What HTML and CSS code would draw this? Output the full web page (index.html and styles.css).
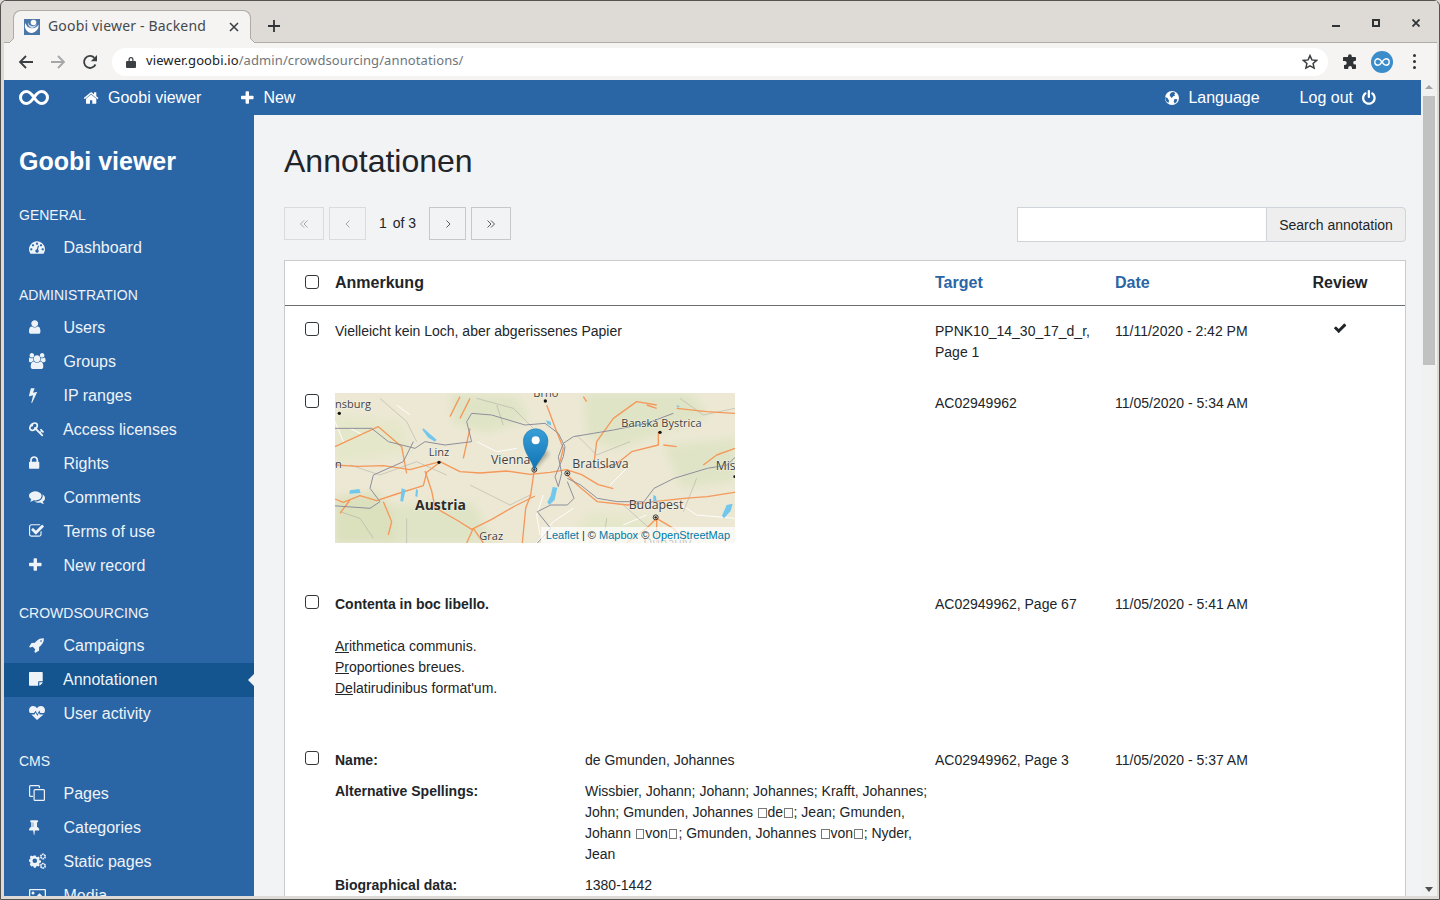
FILE: index.html
```html
<!DOCTYPE html>
<html lang="en">
  <head>
    <meta charset="UTF-8" />
    <title>Goobi viewer - Backend</title>
    <link rel="stylesheet" href="styles.css">
  </head>
  <body>
    <svg class="sprite" xmlns="http://www.w3.org/2000/svg">
      <symbol id="i-home" viewBox="96 0 2016 1792"><path d="M1472 992v480q0 26-19 45t-45 19h-384v-384h-256v384h-384q-26 0-45-19t-19-45v-480q0-1 .5-3t.5-3l575-474 575 474q1 2 1 6zm223-69l-62 74q-8 9-21 11h-3q-13 0-21-7l-692-577-692 577q-12 8-24 7-13-2-21-11l-62-74q-8-10-7-23.5t11-21.5l719-599q32-26 76-26t76 26l244 204v-195q0-14 9-23t23-9h192q14 0 23 9t9 23v408l219 182q10 8 11 21.5t-7 23.5z"/></symbol>
      <symbol id="i-plus" viewBox="192 0 2016 1792"><path d="M1600 736v192q0 40-28 68t-68 28h-416v416q0 40-28 68t-68 28h-192q-40 0-68-28t-28-68v-416h-416q-40 0-68-28t-28-68v-192q0-40 28-68t68-28h416v-416q0-40 28-68t68-28h192q40 0 68 28t28 68v416h416q40 0 68 28t28 68z"/></symbol>
      <symbol id="i-power" viewBox="128 0 2016 1792"><path d="M1664 896q0 156-61 298t-164 245-245 164-298 61-298-61-245-164-164-245-61-298q0-182 80.5-343t226.5-270q43-32 95.5-25t83.5 50q32 42 24.5 94.5t-49.5 84.5q-98 74-151.5 181t-53.5 228q0 104 40.5 198.5t109.5 163.5 163.5 109.5 198.5 40.5 198.5-40.5 163.5-109.5 109.5-163.5 40.5-198.5q0-121-53.5-228t-151.5-181q-42-32-49.5-84.5t24.5-94.5q31-43 84-50t95 25q146 109 226.5 270t80.5 343zm-640-768v640q0 52-38 90t-90 38-90-38-38-90v-640q0-52 38-90t90-38 90 38 38 90z"/></symbol>
      <symbol id="i-check" viewBox="128 0 2016 1792"><path d="M1671 566q0 40-28 68l-724 724-136 136q-28 28-68 28t-68-28l-136-136-362-362q-28-28-28-68t28-68l136-136q28-28 68-28t68 28l294 295 656-657q28-28 68-28t68 28l136 136q28 28 28 68z"/></symbol>
      <symbol id="i-dashboard" viewBox="0 0 2016 1792"><path d="M384 1152q0-53-37.5-90.5t-90.5-37.5-90.5 37.5-37.5 90.5 37.5 90.5 90.5 37.5 90.5-37.5 37.5-90.5zm192-448q0-53-37.5-90.5t-90.5-37.5-90.5 37.5-37.5 90.5 37.5 90.5 90.5 37.5 90.5-37.5 37.5-90.5zm428 481l101-382q6-26-7.5-48.5t-38.5-29.5-48 6.5-30 39.5l-101 382q-60 5-107 43.5t-63 98.5q-20 77 20 146t117 89 146-20 89-117q16-60-6-117t-72-91zm660-33q0-53-37.5-90.5t-90.5-37.5-90.5 37.5-37.5 90.5 37.5 90.5 90.5 37.5 90.5-37.5 37.5-90.5zm-640-640q0-53-37.5-90.5t-90.5-37.5-90.5 37.5-37.5 90.5 37.5 90.5 90.5 37.5 90.5-37.5 37.5-90.5zm448 192q0-53-37.5-90.5t-90.5-37.5-90.5 37.5-37.5 90.5 37.5 90.5 90.5 37.5 90.5-37.5 37.5-90.5zm320 448q0 261-141 483-19 29-54 29h-1402q-35 0-54-29-141-221-141-483 0-182 71-348t191-286 286-191 348-71 348 71 286 191 191 286 71 348z"/></symbol>
      <symbol id="i-user" viewBox="256 0 2016 1792"><path d="M1536 1399q0 109-62.5 187t-150.5 78h-854q-88 0-150.5-78t-62.5-187q0-85 8.5-160.5t31.5-152 58.5-131 94-89 134.5-34.5q131 128 313 128t313-128q76 0 134.5 34.5t94 89 58.5 131 31.5 152 8.5 160.5zm-256-887q0 159-112.5 271.5t-271.5 112.5-271.5-112.5-112.5-271.5 112.5-271.5 271.5-112.5 271.5 112.5 112.5 271.5z"/></symbol>
      <symbol id="i-group" viewBox="0 0 2016 1792"><path d="M529 896q-162 5-265 128h-134q-82 0-138-40.5t-56-118.5q0-353 124-353 6 0 43.5 21t97.5 42.5 119 21.5q67 0 133-23-5 37-5 66 0 139 81 256zm1071 637q0 120-73 189.5t-194 69.5h-874q-121 0-194-69.5t-73-189.5q0-53 3.5-103.5t14-109 26.5-108.5 43-97.5 62-81 85.5-53.5 111.5-20q10 0 43 21.5t73 48 107 48 135 21.5 135-21.5 107-48 73-48 43-21.5q61 0 111.5 20t85.5 53.5 62 81 43 97.5 26.5 108.5 14 109 3.5 103.5zm-1024-1277q0 106-75 181t-181 75-181-75-75-181 75-181 181-75 181 75 75 181zm704 384q0 159-112.5 271.5t-271.5 112.5-271.5-112.5-112.5-271.5 112.5-271.5 271.5-112.5 271.5 112.5 112.5 271.5zm576 225q0 78-56 118.5t-138 40.5h-134q-103-123-265-128 81-117 81-256 0-29-5-66 66 23 133 23 59 0 119-21.5t97.5-42.5 43.5-21q124 0 124 353zm-128-609q0 106-75 181t-181 75-181-75-75-181 75-181 181-75 181 75 75 181z"/></symbol>
      <symbol id="i-bolt" viewBox="448 0 2016 1792"><path d="M1333 566q18 20 7 44l-540 1157q-13 25-42 25-4 0-14-2-17-5-25.5-19t-4.5-30l197-808-406 101q-4 1-12 1-18 0-31-11-18-15-13-39l201-825q4-14 16-23t28-9h328q19 0 32 12.5t13 29.5q0 8-5 18l-171 463 396-98q8-2 12-2 19 0 34 15z"/></symbol>
      <symbol id="i-key" viewBox="0 0 2016 1792"><path d="M832 512q0-80-56-136t-136-56-136 56-56 136q0 42 19 83-41-19-83-19-80 0-136 56t-56 136 56 136 136 56 136-56 56-136q0-42-19-83 41 19 83 19 80 0 136-56t56-136zm851 704q0 17-49 66t-66 49q-9 0-28.5-16t-36.5-33-38.5-40-24.5-26l-96 96 220 220q28 28 28 68 0 42-39 81t-81 39q-40 0-68-28l-671-671q-176 131-365 131-163 0-265.5-102.5t-102.5-265.5q0-160 95-313t248-248 313-95q163 0 265.5 102.5t102.5 265.5q0 189-131 365l355 355 96-96q-3-3-26-24.5t-40-38.5-33-36.5-16-28.5q0-17 49-66t66-49q13 0 23 10 6 6 46 44.5t82 79.5 86.5 86 73 78 28.5 41z"/></symbol>
      <symbol id="i-lock" viewBox="320 0 2016 1792"><path d="M640 768h512v-192q0-106-75-181t-181-75-181 75-75 181v192zm832 96v576q0 40-28 68t-68 28h-960q-40 0-68-28t-28-68v-576q0-40 28-68t68-28h32v-192q0-184 132-316t316-132 316 132 132 316v192h32q40 0 68 28t28 68z"/></symbol>
      <symbol id="i-comments" viewBox="0 0 2016 1792"><path d="M1408 768q0 139-94 257t-256.5 186.5-353.5 68.5q-86 0-176-16-124 88-278 128-36 9-86 16h-3q-11 0-20.5-8t-11.5-21q-1-3-1-6.5t.5-6.5 2-6l2.5-5 3.5-5.5 4-5 4.5-5 4-4.5q5-6 23-25t26-29.5 22.5-29 25-38.5 20.5-44q-124-72-195-177t-71-224q0-139 94-257t256.5-186.5 353.5-68.5 353.5 68.5 256.5 186.5 94 257zm384 256q0 120-71 224.5t-195 176.5q10 24 20.5 44t25 38.5 22.5 29 26 29.5 23 25q1 1 4 4.5t4.5 5 4 5 3.5 5.5l2.5 5 2 6 .5 6.5-1 6.5q-3 14-13 22t-22 7q-50-7-86-16-154-40-278-128-90 16-176 16-271 0-472-132 58 4 88 4 161 0 309-45t264-129q125-92 192-212t67-254q0-77-23-152 129 71 204 178t75 230z"/></symbol>
      <symbol id="i-check-square" viewBox="64 0 2016 1792"><path d="M1472 930v318q0 119-84.5 203.5t-203.5 84.5h-832q-119 0-203.5-84.5t-84.5-203.5v-832q0-119 84.5-203.5t203.5-84.5h832q63 0 117 25 15 7 18 23 3 17-9 29l-49 49q-10 10-23 10-3 0-9-2-23-6-45-6h-832q-66 0-113 47t-47 113v832q0 66 47 113t113 47h832q66 0 113-47t47-113v-254q0-13 9-22l64-64q10-10 23-10 6 0 12 3 20 8 20 29zm231-489l-814 814q-24 24-57 24t-57-24l-430-430q-24-24-24-57t24-57l110-110q24-24 57-24t57 24l263 263 647-647q24-24 57-24t57 24l110 110q24 24 24 57t-24 57z"/></symbol>
      <symbol id="i-rocket" viewBox="64 0 2016 1792"><path d="M1504 448q0-40-28-68t-68-28-68 28-28 68 28 68 68 28 68-28 28-68zm224-288q0 249-75.5 430.5t-253.5 360.5q-81 80-195 176l-20 379q-2 16-16 26l-384 224q-7 4-16 4-12 0-23-9l-64-64q-13-14-8-32l85-276-281-281-276 85q-3 1-9 1-14 0-23-9l-64-64q-17-19-5-39l224-384q10-14 26-16l379-20q96-114 176-195 188-187 358-258t431-71q14 0 24 9.5t10 22.5z"/></symbol>
      <symbol id="i-note" viewBox="0 0 2016 1792"><path d="M1024 1232v416h-928q-40 0-68-28t-28-68v-1344q0-40 28-68t68-28h1344q40 0 68 28t28 68v928h-416q-40 0-68 28t-28 68zm128 32h381q-15 82-65 132l-184 184q-50 50-132 65v-381z"/></symbol>
      <symbol id="i-pin" viewBox="0 0 2016 1792"><path d="M480 864v-448q0-14-9-23t-23-9-23 9-9 23v448q0 14 9 23t23 9 23-9 9-23zm672 352q0 26-19 45t-45 19h-429l-51 483q-2 12-10.5 20.5t-20.5 8.5h-1q-27 0-32-27l-76-485h-404q-26 0-45-19t-19-45q0-123 78.5-221.5t177.5-98.5v-512q-52 0-90-38t-38-90 38-90 90-38h640q52 0 90 38t38 90-38 90-90 38v512q99 0 177.5 98.5t78.5 221.5z"/></symbol>
      <symbol id="i-heart" viewBox="0 0 18 16"><path d="M8 15 2.400 9.400h3.100l1.200-1.900 1.600 3.600 1.700-3.400.7 1.700h3.900zM.9 8.100C.3 7.200 0 6.300 0 5.200 0 2.700 1.800 1 4 1c1.700 0 3 .9 4 2.200C9 1.900 10.300 1 12 1c2.200 0 4 1.700 4 4.200 0 1.100-.3 2-.9 2.900h-3.700L10.300 5.400 8.300 9.300 6.800 5.700 4.900 8.100z"/></symbol>
      <symbol id="i-copy" viewBox="0 0 18 16"><path d="M1.500 0h8a1.500 1.500 0 0 1 1.500 1.500V3H9.800V1.500a.3.300 0 0 0-.3-.3h-8a.3.300 0 0 0-.3.300v9a.3.300 0 0 0 .3.300H4V12H1.500A1.500 1.500 0 0 1 0 10.500v-9A1.500 1.500 0 0 1 1.500 0zm4.500 4h8.500A1.500 1.500 0 0 1 16 5.500v9a1.500 1.500 0 0 1-1.500 1.500H6a1.500 1.500 0 0 1-1.500-1.500v-9A1.500 1.500 0 0 1 6 4zm0 1.200a.3.300 0 0 0-.3.300v9a.3.300 0 0 0 .3.300h8.500a.3.300 0 0 0 .3-.3v-9a.3.300 0 0 0-.3-.3z" fill-rule="evenodd"/></symbol>
      <symbol id="i-cogs" viewBox="0 0 18 16"><path fill-rule="evenodd" d="M4.800 4.200h2l.3 1.400 1.100.5 1.300-.7 1.300 1.300-.7 1.300.5 1.100 1.400.3v2l-1.400.3-.5 1.100.7 1.300-1.300 1.300-1.300-.7-1.100.5-.3 1.400h-2l-.3-1.400-1.100-.5-1.300.7L.8 13.100l.7-1.300-.5-1.100-1-.3v-2l1-.3.5-1.100-.7-1.300 1.300-1.300 1.300.7 1.100-.5zm1 3a2.300 2.300 0 1 0 0 4.600 2.300 2.300 0 0 0 0-4.600z" transform="translate(0 -1.800)"/><circle cx="14" cy="3.500" r="2.200" fill="none" stroke="currentColor" stroke-width="1.700" stroke-dasharray="1.600 .5"/><circle cx="14" cy="12.800" r="2.200" fill="none" stroke="currentColor" stroke-width="1.700" stroke-dasharray="1.600 .5"/></symbol>
      <symbol id="i-picture" viewBox="0 0 18 16"><path fill-rule="evenodd" d="M1.200 2h14.600A1.200 1.200 0 0 1 17 3.200v10.600a1.200 1.200 0 0 1-1.200 1.200H1.200A1.200 1.200 0 0 1 0 13.800V3.200A1.200 1.200 0 0 1 1.200 2zm.1 1.200v10.600h14.400V3.200zM4 4.500a1.500 1.500 0 1 1 0 3 1.500 1.500 0 0 1 0-3zM3 12.500v-1.700l2-2 1.500 1.500 4-4 3.500 3.500v2.700z"/></symbol>
    </svg>

    <div class="window">
      <div class="tabstrip">
        <div class="tab">
          <svg class="favicon" viewBox="0 0 16 16"><rect width="16" height="16" fill="#4a76a8"/><path d="M1.500 4a7 7 0 0 0 13 1.500A7.500 7.500 0 0 1 8 14 7 7 0 0 1 1.500 4z" fill="#fff"/><path d="M4 3a5 5 0 0 0 9 2 6 6 0 0 1-5 4A5.500 5.500 0 0 1 4 3z" fill="#d5e0ec"/><circle cx="9.500" cy="3.500" r="2.800" fill="#fff"/></svg>
          <span class="tab-title">Goobi viewer - Backend</span>
          <svg class="tab-close" viewBox="0 0 10 10"><path d="M1 1l8 8M9 1l-8 8" stroke="#3c4043" stroke-width="1.600"/></svg>
        </div>
        <svg class="new-tab" viewBox="0 0 12 12"><path d="M6 0v12M0 6h12" stroke="#303336" stroke-width="1.800"/></svg>
        <div class="win-controls">
          <svg viewBox="0 0 8 8"><path d="M0 7h8" stroke="#303336" stroke-width="2"/></svg>
          <svg viewBox="0 0 8 8"><rect x="1" y="1" width="6" height="6" fill="none" stroke="#303336" stroke-width="2"/></svg>
          <svg viewBox="0 0 8 8"><path d="M.5.5l7 7M7.500.5l-7 7" stroke="#303336" stroke-width="1.800"/></svg>
        </div>
      </div>
      <div class="toolbar">
        <svg class="nav-icon" viewBox="0 0 16 16"><path d="M15 8H2M8 2L2 8l6 6" fill="none" stroke="#3c4043" stroke-width="1.800"/></svg>
        <svg class="nav-icon nav-off" viewBox="0 0 16 16"><path d="M1 8h13M8 2l6 6-6 6" fill="none" stroke="#a5a6a7" stroke-width="1.800"/></svg>
        <svg class="nav-icon" viewBox="0 0 16 16"><path d="M13.500 10.500A6 6 0 1 1 12.400 3.800" fill="none" stroke="#3c4043" stroke-width="1.800"/><path d="M15 1v6.200H8.800z" fill="#3c4043"/></svg>
        <div class="omnibox">
          <svg class="omni-lock" viewBox="0 0 10 12"><path d="M2.500 5V3.500a2.500 2.500 0 0 1 5 0V5H9a1 1 0 0 1 1 1v5a1 1 0 0 1-1 1H1a1 1 0 0 1-1-1V6a1 1 0 0 1 1-1zm1.200 0h2.600V3.500a1.300 1.300 0 0 0-2.600 0z" fill="#3c4043"/></svg>
          <span class="url"><b>viewer.goobi.io</b>/admin/crowdsourcing/annotations/</span>
          <svg class="omni-star" viewBox="0 0 16 16"><path d="M8 1.600l1.900 4.300 4.700.5-3.500 3.100 1 4.600L8 11.800l-4.100 2.300 1-4.600L1.400 6.400l4.700-.5z" fill="none" stroke="#3c4043" stroke-width="1.500"/></svg>
        </div>
        <svg class="puzzle" viewBox="0 0 16 16"><path d="M6 2.200a1.900 1.900 0 0 1 3.800 0V3h3.400a.8.800 0 0 1 .8.800v3h-.9a1.900 1.900 0 0 0 0 3.800h.9v3.600a.8.800 0 0 1-.8.800H10v-1a1.900 1.900 0 0 0-3.800 0v1H2.800a.8.800 0 0 1-.8-.8V11h.7a2 2 0 0 0 0-4H1V3.800a.8.800 0 0 1 .8-.8H6z" fill="#303336"/></svg>
        <span class="avatar">
          <svg viewBox="0 0 30 15"><path d="M15 7.500C12 3 10 1.500 7.500 1.500a6 6 0 0 0 0 12C10 13.500 12 12 15 7.500S20 1.500 22.500 1.500a6 6 0 0 1 0 12C20 13.500 18 12 15 7.500z" fill="none" stroke="#fff" stroke-width="2.600"/></svg>
        </span>
        <span class="dots"><i></i><i></i><i></i></span>
      </div>

      <div class="page">
        <div class="app">
          <header class="topbar">
            <svg class="logo" viewBox="0 0 30 15"><path d="M15 7.500C12 3 10 1.500 7.500 1.500a6 6 0 0 0 0 12C10 13.500 12 12 15 7.500S20 1.500 22.500 1.500a6 6 0 0 1 0 12C20 13.500 18 12 15 7.500z" fill="none" stroke="#fff" stroke-width="3"/></svg>
            <a class="top-link top-home"><svg class="ico"><use href="#i-home"/></svg>Goobi viewer</a>
            <a class="top-link top-new"><svg class="ico"><use href="#i-plus"/></svg>New</a>
            <a class="top-link top-lang">
              <svg class="globe" viewBox="0 0 14 14"><circle cx="7" cy="7" r="7" fill="#fff"/><path d="M6 1.500l2.500-.6 1.800 1-1 1.500.8 1.300-2 .5-1.200 1.700-1.300-1-1-1.800zM9.500 8l2.800.3-.8 2.700-1.800 1.500-1-2zM0 6l2.500 1L4 9.500 3.500 12 1 10z" fill="#2a65a6"/></svg>
              Language
            </a>
            <a class="top-link top-logout">Log out<svg class="ico"><use href="#i-power"/></svg></a>
          </header>

          <div class="main">
            <nav class="sidebar">
              <div class="brand">Goobi viewer</div>

              <h4 class="nav-head">General</h4>
              <a class="nav-item"><svg class="ico"><use href="#i-dashboard"/></svg>Dashboard</a>

              <h4 class="nav-head">Administration</h4>
              <a class="nav-item"><svg class="ico"><use href="#i-user"/></svg>Users</a>
              <a class="nav-item"><svg class="ico"><use href="#i-group"/></svg>Groups</a>
              <a class="nav-item"><svg class="ico"><use href="#i-bolt"/></svg>IP ranges</a>
              <a class="nav-item nudge"><svg class="ico"><use href="#i-key"/></svg>Access licenses</a>
              <a class="nav-item"><svg class="ico"><use href="#i-lock"/></svg>Rights</a>
              <a class="nav-item"><svg class="ico"><use href="#i-comments"/></svg>Comments</a>
              <a class="nav-item"><svg class="ico"><use href="#i-check-square"/></svg>Terms of use</a>
              <a class="nav-item"><svg class="ico"><use href="#i-plus"/></svg>New record</a>

              <h4 class="nav-head">Crowdsourcing</h4>
              <a class="nav-item"><svg class="ico"><use href="#i-rocket"/></svg>Campaigns</a>
              <a class="nav-item nudge active"><svg class="ico"><use href="#i-note"/></svg>Annotationen</a>
              <a class="nav-item"><svg class="ico"><use href="#i-heart"/></svg>User activity</a>

              <h4 class="nav-head">CMS</h4>
              <a class="nav-item"><svg class="ico"><use href="#i-copy"/></svg>Pages</a>
              <a class="nav-item"><svg class="ico"><use href="#i-pin"/></svg>Categories</a>
              <a class="nav-item"><svg class="ico"><use href="#i-cogs"/></svg>Static pages</a>
              <a class="nav-item"><svg class="ico"><use href="#i-picture"/></svg>Media</a>
            </nav>

            <main class="content">
              <h1>Annotationen</h1>

              <div class="controls">
                <div class="pager">
                  <button class="pg-btn pg-wide pg-off"><svg viewBox="0 0 10 10"><path d="M5 1.500L1.500 5 5 8.500M8.500 1.500L5 5l3.500 3.500" /></svg></button>
                  <button class="pg-btn pg-off"><svg viewBox="0 0 10 10"><path d="M6.500 1.500L3 5l3.500 3.500" /></svg></button>
                  <span class="pg-count"><span class="pg-now">1</span> of 3</span>
                  <button class="pg-btn"><svg viewBox="0 0 10 10"><path d="M3.500 1.500L7 5 3.500 8.500" /></svg></button>
                  <button class="pg-btn pg-wide"><svg viewBox="0 0 10 10"><path d="M1.500 1.500L5 5 1.500 8.500M5 1.500L8.500 5 5 8.500" /></svg></button>
                </div>
                <div class="search">
                  <input class="search-input" type="text" />
                  <button class="search-btn">Search annotation</button>
                </div>
              </div>

              <section class="table">
                <div class="row row-head">
                  <div><input class="check" type="checkbox" /></div>
                  <div>Anmerkung</div>
                  <div><a class="sort">Target</a></div>
                  <div><a class="sort">Date</a></div>
                  <div class="cell-review">Review</div>
                </div>

                <div class="row">
                  <div><input class="check" type="checkbox" /></div>
                  <div class="note">Vielleicht kein Loch, aber abgerissenes Papier</div>
                  <div>PPNK10_14_30_17_d_r, Page 1</div>
                  <div>11/11/2020 - 2:42 PM</div>
                  <div class="cell-review"><svg class="ico tick"><use href="#i-check"/></svg></div>
                </div>

                <div class="row">
                  <div><input class="check" type="checkbox" /></div>
                  <div class="note">
                    <div class="map">
                      <svg class="map-svg" viewBox="15 24 1200 450">
                        <defs>
                          <linearGradient id="pin" x1="0" y1="0" x2="0" y2="1"><stop offset="0" stop-color="#3a9ed6"/><stop offset="1" stop-color="#0f74b5"/></linearGradient>
                          <filter id="soft"><feGaussianBlur stdDeviation="12"/></filter>
                          <filter id="shade"><feGaussianBlur stdDeviation="6"/></filter>
                          <filter id="tile"><feGaussianBlur stdDeviation="1"/></filter>
                        </defs>
                        <rect x="15" y="24" width="1200" height="450" fill="#ece8d4"/>
                        <g filter="url(#soft)" fill="#e0e4c6">
                          <path d="M15 340l120-20 60 60 40 94H15z" fill="#dbe0bd"/>
                          <path d="M360 24l200 10 40 70-130 40-100-30z"/>
                          <path d="M760 24h320l60 70-200 70-90 30-80-40z"/>
                          <path d="M1000 180l215-20v130l-160 20z"/>
                          <path d="M180 360l250-10 60 124H200z"/>
                          <path d="M15 90l200 20 30 90-230 40z" fill="#e5e7ca"/>
                          <path d="M780 380l180 20 60 74H700z" fill="#e5e7ca"/>
                        </g>
                        <g filter="url(#tile)">
                          <g fill="none" stroke="#fff" stroke-width="3" opacity=".9">
                            <path d="M15 110l25 60M60 130l40 20M440 170l60 30 60-10M730 370l-60 40-50 64M640 330l-20 60 10 60M1040 350l60 40 115 10M840 300l60-60M200 60l40 30M880 420l70-30"/>
                          </g>
                          <g fill="none" stroke="#a3a29b" stroke-width="2" opacity=".7">
                            <path d="M60 240l90 30 110-40 90 40M420 300l120 60 60-30M830 400l-10 74M880 360l90 80M150 40l80 70 30 60M440 40l110 30 60 60M1050 40l70 50 95-20M740 150l60 60 100-40M1100 280l-40 100M230 400l0 74M30 380l60 20 40 60M500 60l20 60"/>
                          </g>
                          <g fill="none" stroke="#f5985a" stroke-width="4" stroke-linejoin="round">
                            <path d="M15 240l70 4 75-2 80 12 90-24 60 30 60 4 80-6 70 10 60-6 50-8 45 15 50 30 45 12"/>
                            <path d="M330 232l-40 30-10 40-80 25-60 20-50-15-50 20-25-10"/>
                            <path d="M285 258l20 60 10 50 70 40 40 25 60-30 70-40 60-30"/>
                            <path d="M430 430l-20 44M430 430l30 44M612 260l-10 70-15 40-10 104"/>
                            <path d="M15 185l130-60 70 60 15 80"/>
                            <path d="M420 130l-20 90M360 95l30-60M760 35l10 15M650 60l30 80 20 50-10 40"/>
                            <path d="M800 170l50-70 70-50 60 10M800 170l-10 80M985 140v40l-80 20-50 40-50 10"/>
                            <path d="M712 270l30 30 60 50 90 10 80-10 90-10 70-5 95-15"/>
                            <path d="M1000 180l40 5M950 60l30 10M1040 70l90 10 85 5"/>
                            <path d="M980 400l-30 30-60 44M980 400l50 30 40 44M980 400v74"/>
                            <path d="M160 350l25 60-10 40M60 345l-30 40M1120 240l40-30 55-20M420 40l-30 60"/>
                          </g>
                          <g fill="none" stroke="#8e8e9b" stroke-width="3" stroke-linejoin="round">
                            <path d="M15 130l110 0 50 40 80 20 30-20 60 10 80 -10-15-60 15-25 60 5 100 30 60-5 40 30 20 40-5 30-25 60 10 30 10-40-10-50 15-40 30-20 60-10 60-10 100-20 80-30"/>
                            <path d="M250 170l-30 60-90 40-10 40 30 40-30 20-140-10"/>
                            <path d="M712 280l40 20 50 40 60 10 80 0 30-40 60-30 100-30 60-10 30-30 40-10"/>
                            <path d="M712 290l20 50-20 20-50 0-40 20 40 50-40 44"/>
                          </g>
                          <g fill="#71c7ec">
                            <path d="M280 130l40 34-5 6-20-12-18-24zM648 106l14 4 2 12-12-6zM668 306l14 2-8 36-16 16-6-8 10-20zM215 310l12 4-8 36-8-2zM258 312l6 4-2 20-6-2zM60 316l28-4 4 12-34 2zM1190 360l18-4-6 22-20 22-6-8zM970 330l8 4 2 20-10-6zM1040 60l10 4-8 4z"/>
                          </g>
                        </g>
                        <g fill="#111">
                          <circle cx="28" cy="85" r="5"/><circle cx="646" cy="48" r="5"/><circle cx="990" cy="142" r="5"/><circle cx="327" cy="232" r="5"/><circle cx="1214" cy="275" r="4"/>
                        </g>
                        <g fill="none" stroke="#222" stroke-width="2.500">
                          <circle cx="613" cy="254" r="7.500"/><circle cx="712" cy="265" r="7.500"/><circle cx="977" cy="397" r="7.500"/>
                        </g>
                        <g fill="#222">
                          <circle cx="613" cy="254" r="3.500"/><circle cx="712" cy="265" r="3.500"/><circle cx="977" cy="397" r="3.500"/>
                        </g>
                        <g class="map-labels">
                          <text x="15" y="70">nsburg</text>
                          <text x="610" y="35">Brno</text>
                          <text x="874" y="126">Banská Bystrica</text>
                          <text x="296" y="214">Linz</text>
                          <text x="483" y="238" class="map-lg">Vienna</text>
                          <text x="727" y="249" class="map-lg">Bratislava</text>
                          <text x="1157" y="254" class="map-lg">Misl</text>
                          <text x="896" y="373" class="map-lg">Budapest</text>
                          <text x="448" y="464">Graz</text>
                          <text x="255" y="376" class="map-xl">Austria</text>
                          <text x="15" y="248">n</text>
                          <text x="940" y="485" class="map-lg">Dunaújv</text>
                        </g>
                        <path d="M613 254l45-50-45-20z" fill="#000" opacity=".3" filter="url(#shade)"/>
                        <path d="M613 254c-8-30-33-52-33-86a37 37 0 0 1 74 0c0 34-28 56-41 86z" fill="url(#pin)" stroke="#1a72a8" stroke-width="1.500"/>
                        <circle cx="617" cy="166" r="12" fill="#fff"/>
                      </svg>
                      <div class="map-credit"><a>Leaflet</a> | © <a>Mapbox</a> © <a>OpenStreetMap</a></div>
                    </div>
                  </div>
                  <div>AC02949962</div>
                  <div>11/05/2020 - 5:34 AM</div>
                  <div></div>
                </div>

                <div class="row">
                  <div><input class="check" type="checkbox" /></div>
                  <div class="note">
                    <strong>Contenta in boc libello.</strong><br><br>
                    <u>Ar</u>ithmetica communis.<br>
                    <u>Pr</u>oportiones breues.<br>
                    <u>De</u>latirudinibus format'um.
                  </div>
                  <div>AC02949962, Page 67</div>
                  <div>11/05/2020 - 5:41 AM</div>
                  <div></div>
                </div>

                <div class="row">
                  <div><input class="check" type="checkbox" /></div>
                  <div class="note person">
                    <strong>Name:</strong>
                    <span>de Gmunden, Johannes</span>
                    <strong>Alternative Spellings:</strong>
                    <span>Wissbier, Johann; Johann; Johannes; Krafft, Johannes; John; Gmunden, Johannes <i class="tofu"></i>de<i class="tofu"></i>; Jean; Gmunden, Johann <i class="tofu"></i>von<i class="tofu"></i>; Gmunden, Johannes <i class="tofu"></i>von<i class="tofu"></i>; Nyder, Jean</span>
                    <strong>Biographical data:</strong>
                    <span>1380-1442</span>
                  </div>
                  <div>AC02949962, Page 3</div>
                  <div>11/05/2020 - 5:37 AM</div>
                  <div></div>
                </div>
              </section>
            </main>
          </div>
        </div>

        <div class="scrollbar">
          <span class="sb-arrow sb-up"></span>
          <span class="sb-thumb"></span>
          <span class="sb-arrow sb-down"></span>
        </div>
      </div>
    </div>
  </body>
</html>
```

FILE: styles.css
```css
* {
  box-sizing: border-box;
}
html,
body {
  height: 100%;
  margin: 0;
  overflow: hidden;
}
body {
  font-family: "Liberation Sans", Arial, sans-serif;
  font-size: 14px;
  line-height: 21px;
  color: #212529;
  background: #dedbd7;
}
.sprite {
  display: none;
}
.ico {
  width: 18px;
  height: 16px;
  fill: currentColor;
  flex: none;
}

/* browser frame */
.window {
  height: 900px;
  display: flex;
  flex-direction: column;
  padding: 0 2px 3px 3px;
  border: 1px solid #55534f;
  border-top-width: 1px;
  border-radius: 6px 6px 0 0;
}
.tabstrip {
  height: 42px;
  display: flex;
  align-items: flex-end;
  flex: none;
  padding-left: 9px;
  background: #dedbd7;
  border-bottom: 1px solid #aeaca9;
}
.tab {
  position: relative;
  width: 238px;
  height: 33px;
  margin-bottom: -1px;
  display: flex;
  align-items: center;
  padding: 0 11px 0 10px;
  background: #f5f4f3;
  border: 1px solid #aeaca9;
  border-bottom: 0;
  border-radius: 8px 8px 0 0;
}
.tab::before,
.tab::after {
  content: "";
  position: absolute;
  bottom: 0;
  width: 8px;
  height: 8px;
}
.tab::before {
  left: -8px;
  background: radial-gradient(circle at 0 0, transparent 7.5px, #aeaca9 7.5px, #aeaca9 8.5px, #f5f4f3 8.5px);
}
.tab::after {
  right: -8px;
  background: radial-gradient(circle at 100% 0, transparent 7.5px, #aeaca9 7.5px, #aeaca9 8.5px, #f5f4f3 8.5px);
}
.favicon {
  width: 16px;
  height: 16px;
  flex: none;
}
.tab-title {
  margin: -3px 0 0 8px;
  flex: 1;
  font-family: "Noto Sans", sans-serif;
  font-size: 14px;
  letter-spacing: 0.18px;
  color: #45494d;
  white-space: nowrap;
}
.tab-close {
  width: 10px;
  height: 10px;
}
.new-tab {
  width: 12px;
  height: 12px;
  margin: 0 0 10px 17px;
}
.win-controls {
  margin-left: auto;
  margin-bottom: 15px;
  display: flex;
  gap: 32px;
  padding-right: 17px;
}
.win-controls svg {
  width: 8px;
  height: 8px;
}
.toolbar {
  height: 37px;
  flex: none;
  display: flex;
  align-items: center;
  padding: 0 0 0 14px;
  background: #f5f4f3;
}
.nav-icon {
  width: 16px;
  height: 16px;
  margin-right: 16px;
}
.omnibox {
  width: 1216px;
  height: 28px;
  margin-left: -2px;
  display: flex;
  align-items: center;
  padding: 0 10px 0 14px;
  background: #fff;
  border-radius: 14px;
}
.omni-lock {
  width: 10px;
  height: 12px;
}
.url {
  margin: -2px 0 0 10px;
  flex: 1;
  font-family: "Noto Sans", sans-serif;
  font-size: 13px;
  letter-spacing: 0.1px;
  color: #70757a;
}
.url b {
  font-weight: 400;
  color: #202124;
}
.omni-star {
  width: 16px;
  height: 16px;
}
.puzzle {
  width: 16px;
  height: 16px;
  margin-left: 14px;
}
.avatar {
  width: 22px;
  height: 22px;
  margin-left: 13px;
  display: flex;
  align-items: center;
  justify-content: center;
  border-radius: 50%;
  background: #3a8ccb;
}
.avatar svg {
  width: 16px;
  height: 8px;
}
.dots {
  margin-left: 20px;
  display: flex;
  flex-direction: column;
  gap: 3px;
}
.dots i {
  width: 3px;
  height: 3px;
  border-radius: 50%;
  background: #303336;
}

/* page */
.page {
  flex: 1;
  min-height: 0;
  display: flex;
}
.app {
  flex: 1;
  min-width: 0;
  display: flex;
  flex-direction: column;
  background: #f1f3f5;
}
.topbar {
  height: 35px;
  flex: none;
  display: flex;
  align-items: center;
  background: #2a65a6;
  color: #fff;
  font-size: 16px;
}
.logo {
  width: 30px;
  height: 15px;
  margin-left: 15px;
}
.top-link {
  display: flex;
  align-items: center;
}
.top-link .ico {
  width: 18px;
}
.top-home {
  margin-left: 35px;
}
.top-home .ico {
  margin-right: 6px;
}
.top-new {
  margin-left: 40px;
}
.top-new .ico {
  margin-right: 4px;
}
.top-lang {
  margin-left: auto;
}
.globe {
  width: 14px;
  height: 14px;
  margin-right: 9px;
}
.top-logout {
  margin: 0 41px 0 40px;
}
.top-logout .ico {
  margin-left: 9px;
}
.main {
  flex: 1;
  min-height: 0;
  display: flex;
  overflow: hidden;
}

/* sidebar */
.sidebar {
  width: 250px;
  flex: none;
  background: #2a65a6;
  color: #eef3f8;
  font-size: 16px;
  overflow: hidden;
}
.brand {
  padding: 31px 15px 8px;
  font-size: 25px;
  line-height: 30px;
  font-weight: 700;
  color: #fff;
}
.nav-head {
  height: 30px;
  margin: 16px 0 0;
  padding-left: 15px;
  font-size: 14px;
  font-weight: 400;
  line-height: 30px;
  text-transform: uppercase;
}
.nav-item {
  position: relative;
  height: 34px;
  display: flex;
  align-items: center;
  padding-left: 25px;
}
.nav-item .ico {
  margin-right: 16.5px;
}
.nudge .ico {
  margin-right: 16px;
}
.nav-item.active {
  background: linear-gradient(#14548f, #14548f) 0 1px no-repeat;
  box-shadow: 0 1px 0 #14548f;
}
.nav-item.active::after {
  content: "";
  position: absolute;
  right: 0;
  top: 12px;
  border: 6px solid transparent;
  border-right-color: #f1f3f5;
  border-left-width: 0;
}

/* content */
.content {
  flex: 1;
  min-width: 0;
  padding: 24px 15px 0 30px;
  overflow: hidden;
}
h1 {
  margin: 0;
  font-size: 32px;
  line-height: 44px;
  font-weight: 400;
}
.controls {
  margin-top: 24px;
  height: 53px;
  display: flex;
  justify-content: space-between;
  align-items: flex-start;
}
.pager {
  display: flex;
  align-items: center;
  gap: 5px;
}
.pg-btn {
  width: 37px;
  height: 33px;
  padding: 0;
  display: flex;
  align-items: center;
  justify-content: center;
  background: transparent;
  border: 1px solid #c6c9cc;
}
.pg-wide {
  width: 40px;
}
.pg-btn svg {
  width: 10px;
  height: 10px;
  fill: none;
  stroke: #55595d;
  stroke-width: 1;
}
.pg-off {
  border-color: #d9dcde;
}
.pg-off svg {
  stroke: #a5a8ab;
}
.pg-count {
  padding: 0 8px;
  white-space: nowrap;
}
.pg-now {
  margin-right: 2px;
}
.search {
  display: flex;
  height: 35px;
}
.search-input {
  width: 249px;
  height: 35px;
  background: #fff;
  border: 1px solid #ced4da;
  border-right: 0;
}
.search-btn {
  width: 140px;
  height: 35px;
  padding: 0;
  font: 14px "Liberation Sans", Arial, sans-serif;
  color: #212529;
  background: #eee;
  border: 1px solid #ced4da;
  border-radius: 0 4px 4px 0;
}

/* table */
.table {
  background: #fff;
  border: 1px solid #c9cccf;
  border-bottom: 0;
}
.row {
  display: grid;
  grid-template-columns: 50px 600px 180px 180px 1fr;
  padding: 15px 0;
}
.row > div:nth-child(3),
.row > div:nth-child(4) {
  padding-right: 20px;
}
.row-head {
  height: 45px;
  padding: 11px 0 0;
  font-size: 16px;
  font-weight: 700;
  border-bottom: 1px solid #6c6f72;
}
.sort {
  color: #2a65a6;
}
.cell-review {
  padding-right: 20px;
  text-align: center;
}
.check {
  appearance: none;
  display: block;
  width: 14px;
  height: 14px;
  margin: 1px 0 0 20px;
  background: #fff;
  border: 1.5px solid #34373a;
  border-radius: 3px;
}
.row-head .check {
  margin-top: 3px;
}
.note {
  padding-bottom: 21px;
}
.tick {
  display: inline-block;
  width: 16px;
  height: 14px;
  color: #212529;
  margin: 0 -2px 0 2px;
  vertical-align: top;
}
.map {
  position: relative;
  width: 400px;
  height: 150px;
  overflow: hidden;
}
.map-svg {
  display: block;
  width: 400px;
  height: 150px;
}
.map-labels {
  font-family: "Open Sans", "Liberation Sans", sans-serif;
  font-size: 33px;
  fill: #3f3f3c;
  paint-order: stroke;
  stroke: rgba(255, 255, 255, 0.55);
  stroke-width: 3px;
}
.map-lg {
  font-size: 37px;
}
.map-xl {
  font-size: 42px;
  font-weight: 700;
  fill: #2c2c2a;
}
.map-credit {
  position: absolute;
  right: 0;
  bottom: 0;
  padding: 0 5px;
  font-size: 11px;
  line-height: 16px;
  color: #333;
  background: rgba(255, 255, 255, 0.7);
}
.map-credit a {
  color: #0078a8;
}
.person {
  display: grid;
  grid-template-columns: 250px 1fr;
  row-gap: 10px;
}
.tofu {
  display: inline-block;
  width: 8.5px;
  height: 10px;
  margin: 0 1px;
  border: 1px solid #777;
  vertical-align: -1px;
}

/* scrollbar */
.scrollbar {
  width: 16px;
  flex: none;
  display: flex;
  flex-direction: column;
  align-items: center;
  background: #f1f1f1;
}
.sb-thumb {
  width: 12px;
  height: 269px;
  margin-top: 7px;
  background: #c1c1c1;
}
.sb-arrow {
  width: 0;
  height: 0;
  border: 4px solid transparent;
  border-top-width: 0;
  border-bottom: 4px solid #a3a3a3;
  margin-top: 5px;
}
.sb-down {
  margin-top: auto;
  margin-bottom: 4px;
  border-bottom: 0;
  border-top: 5px solid #505050;
}
```
